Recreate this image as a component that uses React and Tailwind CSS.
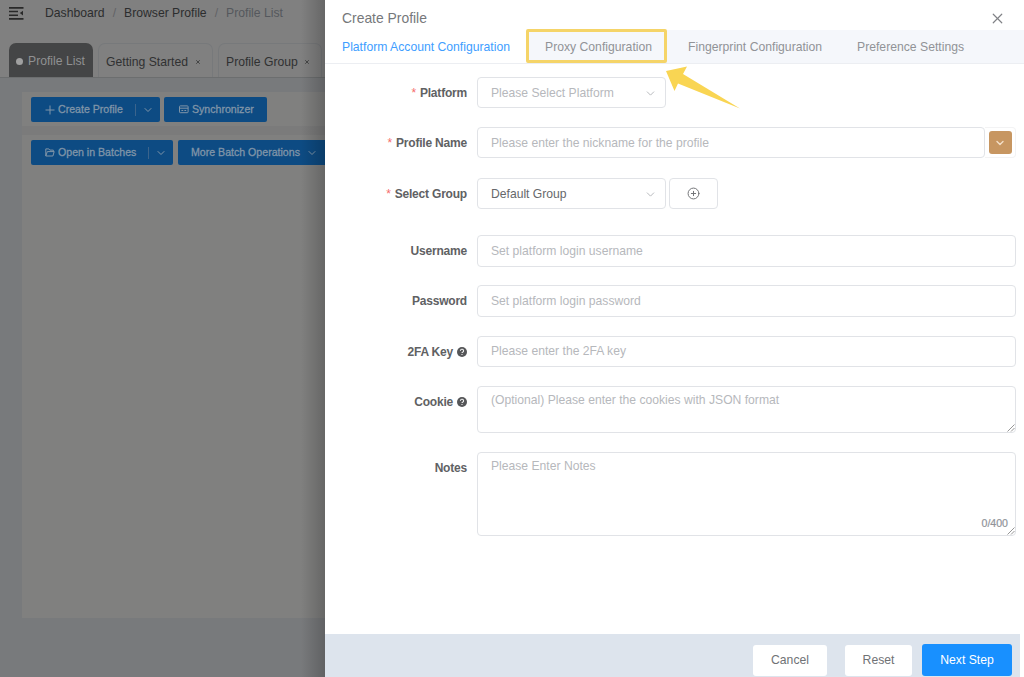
import { ChevronDown, CirclePlus, X } from "lucide-react";

const tabs = [
  { name: "Getting Started", box: "w-[115px]" },
  { name: "Profile Group", box: "w-[104px]" },
];

function FoldIcon() {
  return (
    <svg className="w-[15px] h-[13px]" viewBox="0 0 15 13" fill="#292929">
      <path d="M0 0h14.5v1.7H0zM0 3.7h9v1.6H0zM0 7.4h9V9H0zM0 11h14.5v1.7H0zM14 3.8v4.6L10.8 6.1z" />
    </svg>
  );
}

function PlusIcon() {
  return (
    <svg className="w-[10px] h-[10px]" viewBox="0 0 10 10" stroke="#8095a8">
      <path d="M5 0.5v9M0.5 5h9" />
    </svg>
  );
}

function SyncIcon() {
  return (
    <svg className="w-[10px] h-[9px]" viewBox="0 0 10 9" fill="none" stroke="#8095a8">
      <rect x="0.5" y="0.9" width="8.6" height="6.8" rx="0.8" />
      <path d="M0.5 3.2h8.6M2.4 5.5h1.8M5.4 5.5h1.8" />
    </svg>
  );
}

function FolderIcon() {
  return (
    <svg className="w-[10px] h-[9px]" viewBox="0 0 10 9" fill="none" stroke="#8095a8">
      <path d="M0.8 8V0.9h3l1 1.2h3.5v1.5M0.8 8h7.1l1.3-4.4H2.3L0.8 8" />
    </svg>
  );
}

function HelpIcon() {
  return (
    <svg className="ml-1 w-[10px] h-[10px]" viewBox="0 0 10 10">
      <circle cx="5" cy="5" r="5" fill="#555658" />
      <path d="M3.4 3.9a1.6 1.5 0 1 1 2.2 1.3q-.6.3-.6.9M5 7v1" fill="none" stroke="#eee" strokeWidth="1.1" />
    </svg>
  );
}

function ResizeGrip() {
  return (
    <svg className="absolute right-0 bottom-0 w-2 h-2" viewBox="0 0 8 8" stroke="#8a8a8a" strokeWidth="0.9">
      <path d="M0.5 7.5l7-7M4 7.5l3.5-3.5" />
    </svg>
  );
}

function SplitButton({ icon, children, className }) {
  return (
    <div className={"flex items-center h-[25px] rounded-[2px] bg-[#0d4b83] text-[10.6px] [-webkit-text-stroke:0.3px] text-[#8095a8] " + className}>
      {icon}
      <span className="flex-1 ml-[3px] whitespace-nowrap">{children}</span>
      <span className="w-px h-[12px] mr-[6px] bg-[#3b648c]"></span>
      <ChevronDown className="w-[12px] h-[12px] mr-[6px]" strokeWidth={2} />
    </div>
  );
}

function Sidebar() {
  return (
    <div className="relative flex flex-col w-[325px] shrink-0 overflow-hidden bg-[#787a7c]">
      <div className="h-[78px] shrink-0 bg-[#808080] border-b border-[#6c6e6f]">
        <div className="flex items-center h-[26px] pl-[9px] text-[12.2px] text-[#2c2d2e] whitespace-nowrap">
          <FoldIcon />
          <span className="ml-[21px]">Dashboard</span>
          <span className="mx-2 text-[#606266]">/</span>
          <span>Browser Profile</span>
          <span className="mx-2 text-[#606266]">/</span>
          <span className="text-[#55585d]">Profile List</span>
        </div>
        <div className="flex mt-[17px] h-[34px] gap-[5px] pl-[9px] text-[12.2px] text-[#303132] whitespace-nowrap">
          <div className="flex items-center w-[84px] pl-[7px] pt-[3px] rounded-t-[7px] bg-[#444546] text-[#909192] shrink-0">
            <span className="w-[7px] h-[7px] mr-[5px] rounded-full bg-[#a0a0a0]"></span>
            Profile List
          </div>
          {tabs.map((tab) => (
            <div key={tab.name} className={"flex items-center justify-between pl-[7px] pr-[11px] pt-[3px] rounded-t-[7px] border border-b-0 border-[#77797b] shrink-0 " + tab.box}>
              {tab.name}
              <X className="w-[6px] h-[6px]" strokeWidth={3} />
            </div>
          ))}
        </div>
      </div>
      <div className="ml-[22px] mt-[14px] h-[526px] shrink-0 bg-[#80807f]">
        <div className="flex h-[34px] gap-1 pl-[9px] pt-[5px]">
          <SplitButton icon={<PlusIcon />} className="w-[129px] pl-[14px]">Create Profile</SplitButton>
          <div className="flex items-center w-[103px] h-[25px] pl-[15px] gap-[3px] rounded-[2px] bg-[#0d4b83] text-[10.6px] [-webkit-text-stroke:0.3px] text-[#8095a8]">
            <SyncIcon />
            Synchronizer
          </div>
        </div>
        <div className="h-[9px] bg-[#7b7b7b]"></div>
        <div className="flex gap-[5px] pl-[9px] pt-[5px]">
          <SplitButton icon={<FolderIcon />} className="w-[142px] shrink-0 pl-[14px]">Open in Batches</SplitButton>
          <div className="flex items-center shrink-0 w-[160px] h-[25px] pl-[13px] rounded-[2px] bg-[#0d4b83] text-[10.6px] [-webkit-text-stroke:0.3px] text-[#8095a8] whitespace-nowrap">
            More Batch Operations
            <ChevronDown className="w-[12px] h-[12px] ml-[6px]" />
          </div>
        </div>
      </div>
      <div className="absolute inset-y-0 right-0 w-[24px] bg-linear-to-r from-transparent to-black/20"></div>
    </div>
  );
}

function Row({ label, required, help, className, children }) {
  return (
    <div className={"flex " + className}>
      <div className="flex items-center justify-end w-[142px] h-[32px] mr-[10px] font-bold text-[12px] tracking-[-0.2px] text-[#606163] whitespace-nowrap">
        {required && <span className="mr-1 font-normal text-[#f56c6c]">*</span>}
        {label}
        {help && <HelpIcon />}
      </div>
      {children}
    </div>
  );
}

function Field({ className, children }) {
  return (
    <div className={"relative flex pl-[13px] border border-[#e1e3e7] rounded-[4px] text-[12.15px] text-[#b6b8bc] whitespace-nowrap " + className}>
      {children}
    </div>
  );
}

function Drawer() {
  return (
    <div className="relative flex flex-col flex-1 bg-white">
      <div className="flex items-center justify-between h-[30px] pl-[17px] pr-[18px] pt-[7px] text-[13.9px] text-[#76787b]">
        <span>Create Profile</span>
        <X className="w-[17px] h-[17px] text-[#808286]" strokeWidth={1.7} />
      </div>
      <div className="flex h-[34px] pt-px bg-[#f5f7fb] border-b border-[#eceef2] text-[12.2px] text-[#919397] whitespace-nowrap">
        <div className="flex items-center w-[202px] -mt-px pt-[2px] pl-[17px] bg-white text-[#409eff]">Platform Account Configuration</div>
        <div className="flex items-center w-[143px] pt-px pl-[18px]">Proxy Configuration</div>
        <div className="flex items-center w-[170px] pt-px pl-[18px]">Fingerprint Configuration</div>
        <div className="flex items-center pt-px pl-[17px]">Preference Settings</div>
      </div>

      <div className="flex-1 pt-[13px]">
        <Row label="Platform" required className="mb-[18px]">
          <Field className="w-[189px] h-[31px] pt-px items-center">
            Please Select Platform
            <ChevronDown className="absolute right-[8px] w-[13px] h-[13px]" strokeWidth={1.8} />
          </Field>
        </Row>
        <Row label="Profile Name" required className="mb-[19px]">
          <Field className="w-[508px] h-[31px] pt-px items-center">Please enter the nickname for the profile</Field>
          <div className="flex items-center justify-center w-[31px] h-[31px] border border-l-0 border-[#f3f3f4] rounded-r-[4px]">
            <span className="flex items-center justify-center w-[23px] h-[23px] rounded-[3px] bg-[#c79661]">
              <ChevronDown className="w-[12px] h-[12px] text-[#f3dfc8]" strokeWidth={2.8} />
            </span>
          </div>
        </Row>
        <Row label="Select Group" required className="mb-[25px]">
          <Field className="w-[189px] h-[31px] pt-px items-center">
            <span className="text-[#66686b]">Default Group</span>
            <ChevronDown className="absolute right-[8px] w-[13px] h-[13px]" strokeWidth={1.8} />
          </Field>
          <div className="flex items-center justify-center w-[49px] h-[31px] ml-[3px] border border-[#e1e3e7] rounded-[4px]">
            <CirclePlus className="w-[13px] h-[13px] text-[#707275]" strokeWidth={1.8} />
          </div>
        </Row>
        <Row label="Username" className="mb-[18px]">
          <Field className="w-[539px] h-[32px] items-center">Set platform login username</Field>
        </Row>
        <Row label="Password" className="mb-[19px]">
          <Field className="w-[539px] h-[32px] items-center">Set platform login password</Field>
        </Row>
        <Row label="2FA Key" help className="mb-[18px]">
          <Field className="w-[539px] h-[31px] items-center">Please enter the 2FA key</Field>
        </Row>
        <Row label="Cookie" help className="mb-[19px]">
          <Field className="w-[539px] h-[47px] pt-[4px]">
            (Optional) Please enter the cookies with JSON format
            <ResizeGrip />
          </Field>
        </Row>
        <Row label="Notes">
          <Field className="w-[539px] h-[84px] pt-[4px]">
            Please Enter Notes
            <span className="absolute right-[7px] bottom-[3px] text-[10.6px] [-webkit-text-stroke:0.2px] text-[#909399]">0/400</span>
            <ResizeGrip />
          </Field>
        </Row>
      </div>

      <div className="flex items-center justify-end h-[43px] mr-[4px] pt-[9px] pr-[8px] bg-[#dde4ed] text-[12.2px] text-[#707275]">
        <button className="w-[74px] h-[31px] mr-[18px] rounded-[3px] bg-white">Cancel</button>
        <button className="w-[67px] h-[31px] mr-[10px] rounded-[3px] bg-white">Reset</button>
        <button className="w-[90px] h-[32px] rounded-[3px] bg-[#1890ff] text-white">Next Step</button>
      </div>

      {/* highlight on the proxy tab */}
      <div className="absolute left-[201px] top-[29px] w-[141px] h-[34px] border-[3px] border-[#f5d468] rounded-[2px]"></div>
      <svg className="absolute left-[341px] top-[66px] w-[75px] h-[43px]" viewBox="0 0 75 43" fill="#f9d553">
        <path d="M0 5L21 0.5L17 8L74 42.5L12 17.5L8.5 25z" />
      </svg>
    </div>
  );
}

export default function App() {
  return (
    <div className="flex w-[1024px] h-[677px] overflow-hidden font-['Liberation_Sans',Arial,sans-serif]">
      <Sidebar />
      <Drawer />
    </div>
  );
}
